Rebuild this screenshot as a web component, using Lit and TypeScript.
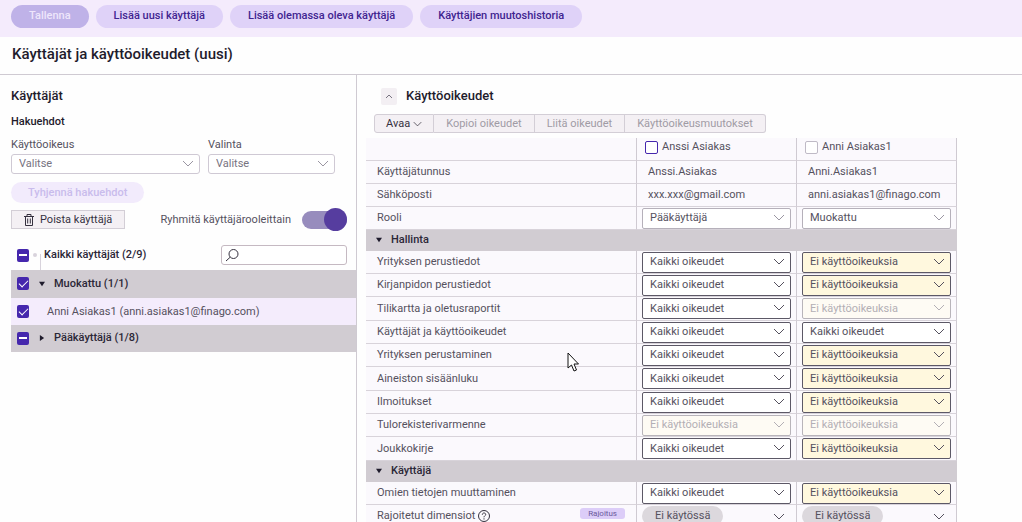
import { LitElement, html, css, svg, nothing } from "lit";
import { customElement } from "lit/decorators.js";
import { classMap } from "lit/directives/class-map.js";

type Level = "full" | "none" | "locked";

interface Permission {
  name: string;
  levels: [Level, Level];
}

const FULL = "Kaikki oikeudet";
const NONE = "Ei käyttöoikeuksia";

const management: Permission[] = [
  { name: "Yrityksen perustiedot", levels: ["full", "none"] },
  { name: "Kirjanpidon perustiedot", levels: ["full", "none"] },
  { name: "Tilikartta ja oletusraportit", levels: ["full", "locked"] },
  { name: "Käyttäjät ja käyttöoikeudet", levels: ["full", "full"] },
  { name: "Yrityksen perustaminen", levels: ["full", "none"] },
  { name: "Aineiston sisäänluku", levels: ["full", "none"] },
  { name: "Ilmoitukset", levels: ["full", "none"] },
  { name: "Tulorekisterivarmenne", levels: ["locked", "locked"] },
  { name: "Joukkokirje", levels: ["full", "none"] },
];

const users = [
  { name: "Anssi Asiakas", login: "Anssi.Asiakas", email: "xxx.xxx@gmail.com", role: "Pääkäyttäjä" },
  { name: "Anni Asiakas1", login: "Anni.Asiakas1", email: "anni.asiakas1@finago.com", role: "Muokattu" },
];

const chevron = html`<svg class="chevron" viewBox="0 0 12 7" aria-hidden="true">
  ${svg`<path d="M1 1l5 5 5-5" fill="none" stroke="currentColor" />`}
</svg>`;

@customElement("app-root")
export class AppRoot extends LitElement {
  static styles = css`
    :host {
      display: flex;
      flex-direction: column;
      height: 100vh;
      overflow: hidden;
      background: #fefefe;
      color: #55515e;
      font: 11px/16px Roboto, "Noto Sans", sans-serif;
    }
    * { box-sizing: border-box; }
    button, select, input { font: inherit; color: inherit; margin: 0; }
    h1, h2, h3 { margin: 0; color: #1f1b2c; font-weight: 500; }
    svg { display: block; }

    .actions {
      display: flex;
      gap: 7px;
      padding: 5px 11px 9px;
      background: #f4ebfc;
    }
    .pill {
      height: 23px;
      padding: 0 18px 2px;
      border: 0;
      border-radius: 12px;
      background: #dfd2f8;
      color: #3f2590;
      font-weight: 500;
      white-space: nowrap;
    }
    .pill.save { background: #bfb2e8; color: #eee6fb; }
    .pill.clear { height: 21px; padding: 0 17px; background: #f2ebfc; color: #c9bcec; }

    .title {
      padding: 7px 12px 10px;
      border-bottom: 1px solid #cfcad2;
    }
    .title h1 { font-size: 15px; line-height: 20px; }

    .main { flex: 1; display: flex; min-height: 0; }
    .side { flex: 0 0 357px; padding-left: 11px; border-right: 1px solid #cfcad2; }
    .side h2 { padding-top: 11px; font-size: 13px; line-height: 20px; }
    .side h3 { padding-top: 8px; font-size: 11px; line-height: 16px; }

    .filters { display: flex; gap: 8px; padding-top: 7px; }
    .field { display: flex; flex-direction: column; gap: 1px; }
    .field.wide { width: 189px; }
    .field.small { width: 127px; }

    .pick { display: grid; align-items: center; }
    .pick select, .pick .chevron { grid-area: 1 / 1; }
    .chevron { width: 12px; height: 7px; }
    .pick .chevron { justify-self: end; margin-right: 6px; margin-bottom: 2px; pointer-events: none; }
    .pick select {
      appearance: none;
      width: 100%;
      height: 21px;
      padding: 0 20px 0 7px;
      border: 1px solid #5c5866;
      border-radius: 2px;
      background: #fff;
    }
    .pick.soft { color: #77737f; }
    .pick.soft select { height: 20px; border-color: #cfc9d4; border-radius: 3px; }
    .pick.soft .chevron, .pick.role .chevron { color: #9a96a2; }
    .pick.role select { border-color: #b5b0ba; }
    .pick.none select { background: #fff8de; }
    .pick.locked { color: #b3afb5; }
    .pick.locked select { background: #fefbf4; border-color: #b8b4ba; opacity: 1; }

    .clear-row { padding: 8px 0 7px; }
    .tools { display: flex; align-items: center; height: 19px; padding-right: 9px; }
    .flat {
      display: flex;
      align-items: center;
      justify-content: center;
      height: 19px;
      padding: 0 12px;
      border: 1px solid #d3ced6;
      background: #f4f0f4;
      color: #35313f;
      white-space: nowrap;
    }
    .remove { gap: 6px; }
    .trash { width: 10px; height: 12px; }
    .grouping { display: flex; align-items: center; gap: 11px; margin-left: auto; }
    .switch {
      appearance: none;
      display: flex;
      width: 45px;
      height: 18px;
      border-radius: 9px;
      background: #978cbd;
      align-items: center;
      justify-content: flex-end;
    }
    .switch::before {
      content: "";
      flex: none;
      width: 23px;
      height: 23px;
      border-radius: 50%;
      background: #563d9f;
    }

    .check {
      appearance: none;
      flex: none;
      display: grid;
      place-items: center;
      width: 12px;
      height: 13px;
      border-radius: 2px;
      background: #4527ad;
    }
    .check.ticked::before {
      content: "";
      width: 8px;
      height: 4px;
      margin-bottom: 2px;
      border: solid #fff;
      border-width: 0 0 1px 1px;
      transform: rotate(-45deg);
    }
    .check.partial::before { content: ""; width: 8px; height: 2px; background: #fff; }
    .check.empty { width: 13px; background: #fff; border: 1px solid #4527ad; }
    .check.empty.off { border-color: #bfbac6; }

    .all { display: flex; align-items: center; height: 37px; padding: 7px 9px 0 6px; margin-top: 4px; }
    .dot { width: 4px; height: 4px; margin-left: 4px; border-radius: 50%; background: #d8d3dc; }
    .stem { align-self: flex-end; width: 1px; height: 16px; margin: 0 3px; background: #d8d3dc; }
    .strong { color: #2b2737; font-weight: 500; }
    .search {
      display: grid;
      align-items: center;
      width: 126px;
      margin-left: auto;
    }
    .search input {
      grid-area: 1 / 1;
      width: 100%;
      height: 20px;
      padding: 0 6px 0 24px;
      border: 1px solid #c5b9c2;
      border-radius: 3px;
      background: #fff;
    }
    .search svg { grid-area: 1 / 1; width: 14px; height: 14px; margin-left: 4px; pointer-events: none; }

    .node { display: flex; align-items: center; height: 27px; padding-left: 6px; }
    .node.group { padding-bottom: 1px; background: #d1ccd2; }
    .node.group.first { height: 28px; }
    .node.user { background: #f4ecfc; }
    .node.user label { margin-left: 18px; }
    .arrow {
      display: grid;
      place-items: center;
      width: 25px;
      height: 16px;
      padding: 0;
      border: 0;
      background: none;
    }
    .arrow svg { width: 6px; height: 6px; fill: #1f1b2c; }

    .rights { flex: 1; min-width: 0; overflow: hidden; padding: 11px 9px 0; }
    .heading { display: flex; align-items: center; gap: 9px; padding-left: 15px; }
    .heading h2 { font-size: 13px; line-height: 20px; }
    .fold {
      display: grid;
      place-items: center;
      width: 16px;
      height: 17px;
      padding: 0;
      border: 0;
      border-radius: 2px;
      background: #f3eff3;
    }
    .fold svg { width: 8px; height: 5px; }
    .bar { display: flex; padding: 8px 0 5px 8px; }
    .bar .flat { border-left-width: 0; color: #a09ba5; }
    .bar .flat:first-child {
      gap: 3px;
      padding: 0 11px;
      border-left-width: 1px;
      border-radius: 3px 0 0 3px;
      color: #35313f;
    }
    .bar .flat:last-child { border-radius: 0 3px 3px 0; }
    .bar .chevron { width: 9px; height: 6px; }

    table { width: 591px; table-layout: fixed; border-collapse: separate; border-spacing: 0; }
    .c-name { width: 271px; }
    td, th {
      height: 23px;
      padding: 0 0 0 11px;
      border-right: 1px solid #cfcad2;
      border-bottom: 1px solid #d8d3da;
      background: #fbf9fd;
      font-weight: 400;
      text-align: left;
      white-space: nowrap;
    }
    tbody tr:nth-child(3n) > * { height: 24px; }
    td.choice { padding: 0 5px; }
    thead tr.who label { display: flex; align-items: center; gap: 4px; }
    thead tr.who th { padding: 0 0 4px 8px; }
    tbody th.group, tbody tr:first-child > th.group {
      height: 21px;
      padding: 0;
      border: 0;
      background: #d1ccd2;
    }
    .caption { display: flex; align-items: center; height: 21px; padding-bottom: 2px; }
    .extra { display: flex; align-items: center; gap: 3px; padding-right: 11px; }
    .help { width: 12px; height: 12px; }
    .tag {
      align-self: flex-start;
      margin-left: auto;
      padding: 0 8px;
      border-radius: 3px;
      background: #dccdf8;
      color: #6b5a9c;
      font-size: 8px;
      line-height: 11px;
    }
    .multi {
      display: flex;
      align-items: center;
      justify-content: space-between;
      width: 100%;
      padding: 0 6px 0 0;
      border: 0;
      background: none;
    }
    .chip { padding: 2px 13px; border-radius: 10px; background: #dcd8dd; }

    .pointer { position: absolute; left: 567px; top: 352px; width: 13px; height: 20px; pointer-events: none; }
  `;

  private pick(label: string, value: string, kind: string, disabled = false) {
    return html`<div class="pick ${kind}">
      <select aria-label=${label} ?disabled=${disabled}>
        <option>${value}</option>
      </select>
      ${chevron}
    </div>`;
  }

  private arrow(open: boolean, label: string) {
    return html`<button class="arrow" aria-label=${label} aria-expanded=${open}>
      <svg viewBox="0 0 7 7">${open ? svg`<path d="M0 1h7L3.500 6z" />` : svg`<path d="M1 0v7l5-3.500z" />`}</svg>
    </button>`;
  }

  private permissionRow(p: Permission) {
    return html`<tr>
      <th scope="row">${p.name}</th>
      ${p.levels.map(
        (level, i) => html`<td class="choice">
          ${this.pick(`${p.name}, ${users[i].name}`, level === "full" ? FULL : NONE, level, level === "locked")}
        </td>`
      )}
    </tr>`;
  }

  private groupRow(name: string) {
    return html`<tr>
      <th class="group" colspan="3" scope="rowgroup">
        <div class="caption strong">${this.arrow(true, name)}${name}</div>
      </th>
    </tr>`;
  }

  private node(id: string, text: string, state: "ticked" | "partial", kind: string, open?: boolean) {
    return html`<div class="node ${kind}">
      <input
        id=${id}
        type="checkbox"
        class=${classMap({ check: true, [state]: true })}
        .checked=${state === "ticked"}
        .indeterminate=${state === "partial"}
      />
      ${open === undefined ? nothing : this.arrow(open, text)}
      <label for=${id} class=${classMap({ strong: open !== undefined })}>${text}</label>
    </div>`;
  }

  private renderSide() {
    return html`<aside class="side">
      <h2>Käyttäjät</h2>
      <h3>Hakuehdot</h3>
      <div class="filters">
        <div class="field wide">
          <label for="right">Käyttöoikeus</label>
          <div class="pick soft"><select id="right"><option>Valitse</option></select>${chevron}</div>
        </div>
        <div class="field small">
          <label for="choice">Valinta</label>
          <div class="pick soft"><select id="choice"><option>Valitse</option></select>${chevron}</div>
        </div>
      </div>
      <div class="clear-row"><button class="pill clear">Tyhjennä hakuehdot</button></div>
      <div class="tools">
        <button class="flat remove">
          <svg class="trash" viewBox="0 0 10 12" fill="none" stroke="#35313f" aria-hidden="true">
            <path d="M0 2.500h10M3 2.500v-2h4v2M1.500 2.500v9h7v-9M3.700 4.500v5M6.300 4.500v5" />
          </svg>
          Poista käyttäjä
        </button>
        <div class="grouping">
          <label for="grouping">Ryhmitä käyttäjärooleittain</label>
          <input id="grouping" class="switch" type="checkbox" role="switch" checked />
        </div>
      </div>
      <div class="all">
        <input id="all" type="checkbox" class="check partial" .indeterminate=${true} />
        <span class="dot"></span><span class="stem"></span>
        <label for="all" class="strong">Kaikki käyttäjät (2/9)</label>
        <div class="search">
          <input type="search" aria-label="Hae käyttäjiä" />
          <svg viewBox="0 0 14 14" fill="none" stroke="#35313f" aria-hidden="true">
            <circle cx="8.500" cy="6" r="4.500" /><path d="M5.200 9.200L1 13" />
          </svg>
        </div>
      </div>
      ${this.node("muokattu", "Muokattu (1/1)", "ticked", "group first", true)}
      ${this.node("anni", "Anni Asiakas1 (anni.asiakas1@finago.com)", "ticked", "user")}
      ${this.node("paakayttaja", "Pääkäyttäjä (1/8)", "partial", "group", false)}
    </aside>`;
  }

  private renderRights() {
    return html`<section class="rights">
      <div class="heading">
        <button class="fold" aria-label="Piilota käyttöoikeudet">
          <svg viewBox="0 0 8 5"><path d="M1 4l3-3 3 3" fill="none" stroke="#77737f" /></svg>
        </button>
        <h2>Käyttöoikeudet</h2>
      </div>
      <div class="bar">
        <button class="flat">Avaa ${chevron}</button>
        <button class="flat">Kopioi oikeudet</button>
        <button class="flat">Liitä oikeudet</button>
        <button class="flat">Käyttöoikeusmuutokset</button>
      </div>
      <table>
        <colgroup><col class="c-name" /><col /><col /></colgroup>
        <thead>
          <tr class="who">
            <td></td>
            ${users.map(
              (u, i) => html`<th scope="col">
                <label><input type="checkbox" class=${classMap({ check: true, empty: true, off: i === 1 })} />${u.name}</label>
              </th>`
            )}
          </tr>
          <tr><th scope="row">Käyttäjätunnus</th>${users.map((u) => html`<td>${u.login}</td>`)}</tr>
          <tr><th scope="row">Sähköposti</th>${users.map((u) => html`<td>${u.email}</td>`)}</tr>
          <tr>
            <th scope="row">Rooli</th>
            ${users.map((u) => html`<td class="choice">${this.pick(`Rooli, ${u.name}`, u.role, "role")}</td>`)}
          </tr>
        </thead>
        <tbody>${this.groupRow("Hallinta")}</tbody>
        <tbody>${management.map((p) => this.permissionRow(p))}</tbody>
        <tbody>${this.groupRow("Käyttäjä")}</tbody>
        <tbody>
          ${this.permissionRow({ name: "Omien tietojen muuttaminen", levels: ["full", "none"] })}
          <tr>
            <th scope="row">
              <div class="extra">
                Rajoitetut dimensiot
                <svg class="help" viewBox="0 0 12 12" fill="none" stroke="#35313f" aria-hidden="true">
                  <circle cx="6" cy="6" r="5.500" />
                  <path d="M4.300 4.700c0-2.300 3.400-2.200 3.400-.2C7.700 5.800 6 5.700 6 7.300M6 8.300v1.200" />
                </svg>
                <span class="tag">Rajoitus</span>
              </div>
            </th>
            ${users.map(
              () => html`<td class="choice">
                <button class="multi"><span class="chip">Ei käytössä</span>${chevron}</button>
              </td>`
            )}
          </tr>
        </tbody>
      </table>
    </section>`;
  }

  render() {
    return html`
      <nav class="actions">
        <button class="pill save">Tallenna</button>
        <button class="pill">Lisää uusi käyttäjä</button>
        <button class="pill">Lisää olemassa oleva käyttäjä</button>
        <button class="pill">Käyttäjien muutoshistoria</button>
      </nav>
      <header class="title"><h1>Käyttäjät ja käyttöoikeudet (uusi)</h1></header>
      <div class="main">${this.renderSide()}${this.renderRights()}</div>
      <svg class="pointer" viewBox="0 0 13 20" aria-hidden="true">
        <path d="M1 1v15l3.500-3 2.500 6 2.500-1-2.500-6h4.500z" fill="#fff" stroke="#111" />
      </svg>
    `;
  }
}
